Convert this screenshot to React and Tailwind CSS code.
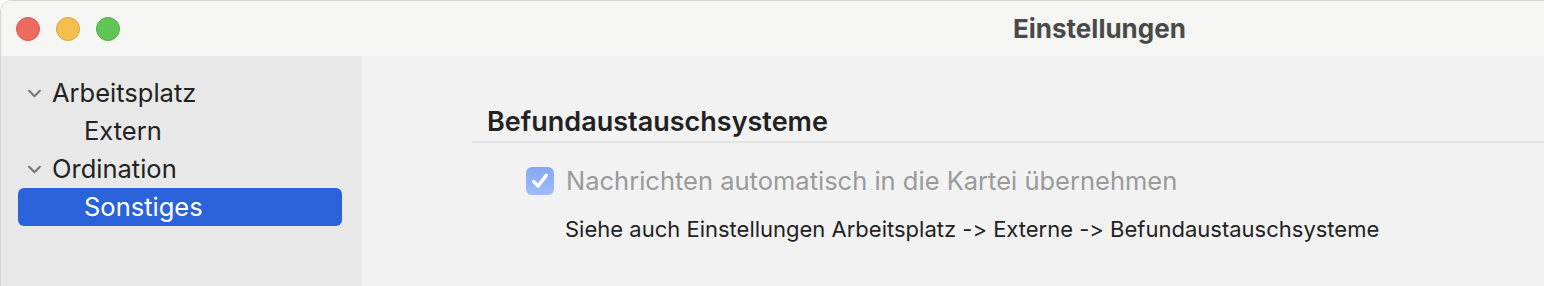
import React from 'react';

const Chevron = () => (
  <svg viewBox="0 0 14 14" className="w-[15px] h-[15px]" fill="none" stroke="#777777" strokeWidth="2" strokeLinecap="round" strokeLinejoin="round">
    <path d="M2 4.5 L7 9.5 L12 4.5" />
  </svg>
);

const TreeItem = ({ label, level, expanded, selected }) => (
  <div className={`flex items-center h-[38px] rounded-[6px] ${selected ? 'bg-[#2a63d9] text-white' : 'text-[#222222]'}`}>
    {level === 0 ? (
      <div className="w-[34px] pl-[9px] flex items-center">{expanded && <Chevron />}</div>
    ) : (
      <div className="w-[66px]" />
    )}
    <span className="text-[25.5px] leading-none">{label}</span>
  </div>
);

const App = () => {
  return (
    <div className="w-[1544px] h-[286px] bg-white overflow-hidden font-['Inter','Noto_Sans',sans-serif] [font-feature-settings:'calt'_0]">
      <div className="h-full flex flex-col rounded-tl-[12px] border-t border-l border-[#d6d6d6] overflow-hidden">
        {/* title bar */}
        <div className="h-[55px] bg-[#f5f5f3] flex items-center">
          <div className="flex items-center gap-[16px] pl-[15px]">
            <span className="w-[24px] h-[24px] rounded-full bg-[#ed6a5e] border border-[#d75a4f]" />
            <span className="w-[24px] h-[24px] rounded-full bg-[#f5bf4f] border border-[#d9a43e]" />
            <span className="w-[24px] h-[24px] rounded-full bg-[#61c554] border border-[#52ad46]" />
          </div>
          <div className="ml-[893px] text-[26px] leading-none font-bold text-[#4a4a4a]">Einstellungen</div>
        </div>

        <div className="flex flex-1">
          {/* sidebar */}
          <div className="w-[361px] bg-[#e8e8e8] pt-[18px] pl-[17px] pr-[20px]">
            <TreeItem label="Arbeitsplatz" level={0} expanded />
            <TreeItem label="Extern" level={1} />
            <TreeItem label="Ordination" level={0} expanded />
            <TreeItem label="Sonstiges" level={1} selected />
          </div>

          {/* content */}
          <div className="flex-1 bg-[#f2f2f2] pl-[110px] pt-[52px]">
            <div className="pl-[15px] text-[27px] font-semibold text-[#222222] leading-none pb-[6px] border-b-2 border-[#e3e3e3]">
              Befundaustauschsysteme
            </div>
            <div className="pl-[54px] pt-[24px]">
              <div className="flex items-center gap-[12px] h-[28px]">
                <span className="w-[28px] h-[28px] rounded-[6px] bg-gradient-to-b from-[#86a8f4] to-[#9dbcf8] flex items-center justify-center">
                  <svg viewBox="0 0 16 16" className="w-[20px] h-[20px]" fill="none" stroke="white" strokeWidth="2.8" strokeLinecap="round" strokeLinejoin="round">
                    <path d="M3 8.5 L6.5 12 L13 3.5" />
                  </svg>
                </span>
                <span className="text-[25.5px] leading-none text-[#9a9a9a]">Nachrichten automatisch in die Kartei übernehmen</span>
              </div>
              <div className="pt-[23px] pl-[39px] text-[22px] leading-none text-[#222222]">
                Siehe auch Einstellungen Arbeitsplatz -&gt; Externe -&gt; Befundaustauschsysteme
              </div>
            </div>
          </div>
        </div>
      </div>
    </div>
  );
};

export default App;
